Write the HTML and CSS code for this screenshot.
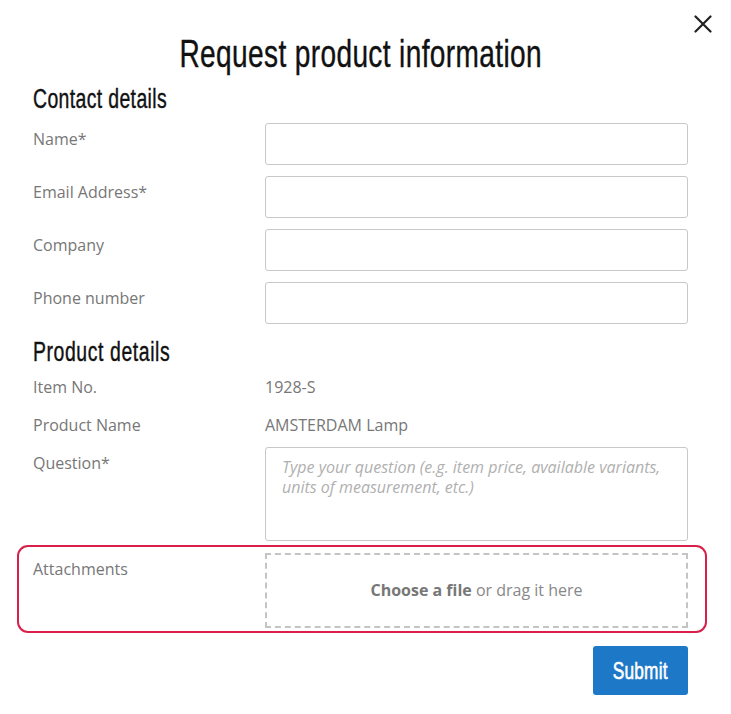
FILE: index.html
```html
<!DOCTYPE html>
<html lang="en">
<head>
<meta charset="utf-8">
<title>Request product information</title>
<link rel="stylesheet" href="styles.css">
</head>
<body>
<div class="modal">
  <button class="close" type="button" aria-label="Close">
    <svg width="18" height="18" viewBox="0 0 18 18"><path d="M1.5 1.5 L16.5 16.5 M16.5 1.5 L1.5 16.5" stroke="#222" stroke-width="2.2" stroke-linecap="round" fill="none"/></svg>
  </button>
  <h1 class="title"><span class="narrow">Request product information</span></h1>

  <h2 class="section"><span class="narrow">Contact details</span></h2>
  <div class="fields">
    <div class="row"><label class="label">Name*</label><input class="input" type="text"></div>
    <div class="row"><label class="label">Email Address*</label><input class="input" type="text"></div>
    <div class="row"><label class="label">Company</label><input class="input" type="text"></div>
    <div class="row"><label class="label">Phone number</label><input class="input" type="text"></div>
  </div>

  <h2 class="section section-2"><span class="narrow">Product details</span></h2>
  <div class="info">
    <div class="info-row"><span class="label">Item No.</span><span class="value">1928-S</span></div>
    <div class="info-row"><span class="label">Product Name</span><span class="value">AMSTERDAM Lamp</span></div>
  </div>
  <div class="row question">
    <label class="label">Question*</label>
    <textarea class="textarea" placeholder="Type your question (e.g. item price, available variants, units of measurement, etc.)"></textarea>
  </div>

  <div class="attach-box">
    <div class="row attach-row">
      <label class="label">Attachments</label>
      <div class="dropzone"><b>Choose a file</b>&nbsp;or drag it here</div>
    </div>
  </div>

  <div class="actions">
    <button class="submit" type="button"><span class="narrow">Submit</span></button>
  </div>
</div>
</body>
</html>
```

FILE: styles.css
```css
html, body {
  margin: 0;
  padding: 0;
  background: #fff;
}

body {
  font-family: "Open Sans", "Liberation Sans", sans-serif;
  font-size: 16px;
  color: #777;
}

.modal {
  position: relative;
  padding: 30px 43px 0 33px;
}

.close {
  position: absolute;
  top: 15px;
  right: 19px;
  width: 18px;
  height: 18px;
  padding: 0;
  border: 0;
  background: none;
  display: flex;
}

.title,
.section,
.submit {
  font-family: "Liberation Sans", Arial, sans-serif;
  font-weight: normal;
  color: #111;
}

.narrow {
  display: inline-block;
  transform: scaleX(0.72);
  transform-origin: left center;
  white-space: nowrap;
  -webkit-text-stroke: 0.4px currentColor;
}

.title {
  margin: 0;
  font-size: 39px;
  line-height: 48px;
  text-align: center;
}

.title .narrow {
  letter-spacing: 0.5px;
  transform-origin: center center;
}

.section {
  margin: 5px 0 0;
  font-size: 27px;
  line-height: 32px;
}

.section .narrow {
  letter-spacing: 0.5px;
}

.section-2 {
  margin-top: 12px;
}

.section-2 .narrow {
  letter-spacing: 0.8px;
}

.fields {
  display: flex;
  flex-direction: column;
  gap: 11px;
  margin-top: 8px;
}

.row {
  display: grid;
  grid-template-columns: 232px 1fr;
  align-items: start;
}

.label {
  line-height: 22px;
  padding-top: 5px;
  color: #777;
}

.input {
  box-sizing: border-box;
  height: 42px;
  width: 100%;
  margin: 0;
  border: 1px solid #c8c8c8;
  border-radius: 3px;
  background: #fff;
  font: inherit;
}

.info {
  display: flex;
  flex-direction: column;
  gap: 16px;
  margin-top: 8px;
}

.info-row {
  display: grid;
  grid-template-columns: 232px 1fr;
  line-height: 22px;
}

.info-row .label {
  padding-top: 0;
}

.value {
  color: #777;
}

.question {
  margin-top: 11px;
}

.question .label {
  padding-top: 5px;
}

.textarea {
  box-sizing: border-box;
  width: 100%;
  height: 94px;
  margin: 0;
  padding: 9px 12px 8px 16px;
  border: 1px solid #c8c8c8;
  border-radius: 3px;
  resize: none;
  font-family: "Open Sans", "Liberation Sans", sans-serif;
  font-size: 16px;
  line-height: 20px;
  display: block;
}

.textarea::placeholder {
  color: #b0b0b0;
  font-style: italic;
  opacity: 1;
}

.attach-box {
  margin: 4px -19px 0 -16px;
  padding: 6px 17px 3px 14px;
  border: 2px solid #d8204a;
  border-radius: 11px;
}

.attach-row .label {
  padding-top: 5px;
}

.dropzone {
  box-sizing: border-box;
  height: 75px;
  padding-bottom: 2px;
  border: 2px dashed #c4c4c4;
  display: flex;
  align-items: center;
  justify-content: center;
  color: #888;
}

.dropzone b {
  font-weight: 700;
  color: #777;
}

.actions {
  display: flex;
  justify-content: flex-end;
  margin-top: 13px;
}

.submit {
  width: 95px;
  height: 49px;
  border: 0;
  border-radius: 3px;
  background: #1e78c8;
  color: #fff;
  font-size: 24px;
  padding: 0;
  display: flex;
  align-items: center;
  justify-content: center;
}

.submit .narrow {
  transform-origin: center center;
  letter-spacing: 0.3px;
  -webkit-text-stroke: 0.6px currentColor;
}
```
